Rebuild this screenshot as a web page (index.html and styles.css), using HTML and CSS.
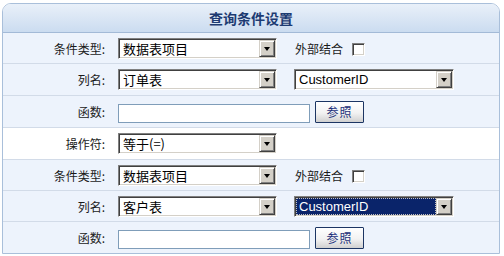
FILE: index.html
```html
<!DOCTYPE html>
<html lang="zh">
<head>
    <meta charset="UTF-8">
    <title>查询条件设置</title>
    <link rel="stylesheet" href="styles.css">
</head>
<body>
    <div class="panel">
        <div class="panel-head">查询条件设置</div>

        <div class="row">
            <div class="label">条件类型:</div>
            <div class="field">
                <div class="combo"><span class="value">数据表项目</span><span class="arrow"></span></div>
                <span class="extra">外部结合</span>
                <span class="check"></span>
            </div>
        </div>
        <div class="row tall">
            <div class="label">列名:</div>
            <div class="field">
                <div class="combo"><span class="value">订单表</span><span class="arrow"></span></div>
                <div class="combo wide"><span class="value latin">CustomerID</span><span class="arrow"></span></div>
            </div>
        </div>
        <div class="row tall">
            <div class="label">函数:</div>
            <div class="field">
                <input class="text" type="text">
                <button class="btn">参照</button>
            </div>
        </div>
        <div class="row tall plain">
            <div class="label">操作符:</div>
            <div class="field">
                <div class="combo"><span class="value">等于(=)</span><span class="arrow"></span></div>
            </div>
        </div>
        <div class="row">
            <div class="label">条件类型:</div>
            <div class="field">
                <div class="combo"><span class="value">数据表项目</span><span class="arrow"></span></div>
                <span class="extra">外部结合</span>
                <span class="check"></span>
            </div>
        </div>
        <div class="row">
            <div class="label">列名:</div>
            <div class="field">
                <div class="combo"><span class="value">客户表</span><span class="arrow"></span></div>
                <div class="combo wide focus"><span class="value latin">CustomerID</span><span class="arrow"></span></div>
            </div>
        </div>
        <div class="row last">
            <div class="label">函数:</div>
            <div class="field">
                <input class="text" type="text">
                <button class="btn">参照</button>
            </div>
        </div>
    </div>
</body>
</html>
```

FILE: styles.css
```css
body {
    margin: 0;
    background: #fff;
    font-family: "Noto Sans CJK SC", "Liberation Sans", sans-serif;
    font-size: 12px;
    color: #222;
}
.panel {
    margin: 3px 0 0 2px;
    width: 496px;
    border: 1px solid #a9bfda;
    border-radius: 9px 9px 0 0;
    overflow: hidden;
}
.panel-head {
    height: 28px;
    line-height: 28px;
    text-align: center;
    font-size: 14px;
    font-weight: bold;
    color: #1d3b72;
    background: linear-gradient(#e9f0f9, #cbdcf0);
    border-bottom: 1px solid #a3bad7;
}
.row {
    display: flex;
    align-items: center;
    box-sizing: border-box;
    height: 31px;
    background: #edf3fc;
    border-bottom: 1px solid #d2dbe8;
}
.row.tall {
    height: 32px;
}
.row.plain {
    background: #fff;
}
.row.last {
    border-bottom: none;
}
.label {
    width: 102px;
    text-align: right;
    color: #1a1a1a;
}
.field {
    display: flex;
    align-items: center;
    padding-left: 13px;
}
.combo {
    display: flex;
    box-sizing: border-box;
    width: 159px;
    height: 21px;
    padding: 1px;
    background: #fff;
    border: 1px solid;
    border-color: #808080 #fff #fff #808080;
    box-shadow: inset 1px 1px 0 #404040, inset -1px -1px 0 #d4d0c8;
}
.combo.wide {
    width: 160px;
    margin-left: 17px;
}
.value {
    flex: 1;
    padding-left: 3px;
    font-size: 13px;
    line-height: 17px;
    color: #000;
}
.value.latin {
    font-family: "Liberation Sans", sans-serif;
    font-size: 13px;
    color: #000;
}
.combo.focus .value {
    background: #0a246a;
    color: #fff;
    outline: 1px dotted #c0c0c0;
    outline-offset: -1px;
}
.arrow {
    position: relative;
    width: 16px;
    height: 17px;
    box-sizing: border-box;
    background: #d4d0c8;
    border: 1px solid;
    border-color: #d4d0c8 #404040 #404040 #d4d0c8;
    box-shadow: inset 1px 1px 0 #fff, inset -1px -1px 0 #808080;
}
.arrow::after {
    content: "";
    position: absolute;
    left: 4px;
    top: 6px;
    border-left: 3.5px solid transparent;
    border-right: 3.5px solid transparent;
    border-top: 4px solid #000;
}
.extra {
    margin-left: 18px;
    color: #1a1a1a;
}
.check {
    width: 11px;
    height: 11px;
    margin-left: 9px;
    margin-top: 3px;
    background: #fff;
    border: 1px solid;
    border-color: #808080 #fff #fff #808080;
    box-shadow: inset 1px 1px 0 #404040, inset -1px -1px 0 #d4d0c8;
}
.text {
    box-sizing: border-box;
    width: 192px;
    height: 19px;
    margin: 3px 0 0;
    padding: 0 2px;
    border: 1px solid #7f9db9;
    background: #fff;
}
.btn {
    box-sizing: border-box;
    width: 49px;
    height: 22px;
    margin-left: 5px;
    padding: 0;
    border: 1px solid #1c3563;
    border-radius: 1px;
    background: linear-gradient(#ffffff, #f2f2f2 55%, #d0d0d0);
    font-family: "Noto Sans CJK SC", sans-serif;
    font-size: 12px;
    color: #22307a;
    letter-spacing: 1px;
}
```
